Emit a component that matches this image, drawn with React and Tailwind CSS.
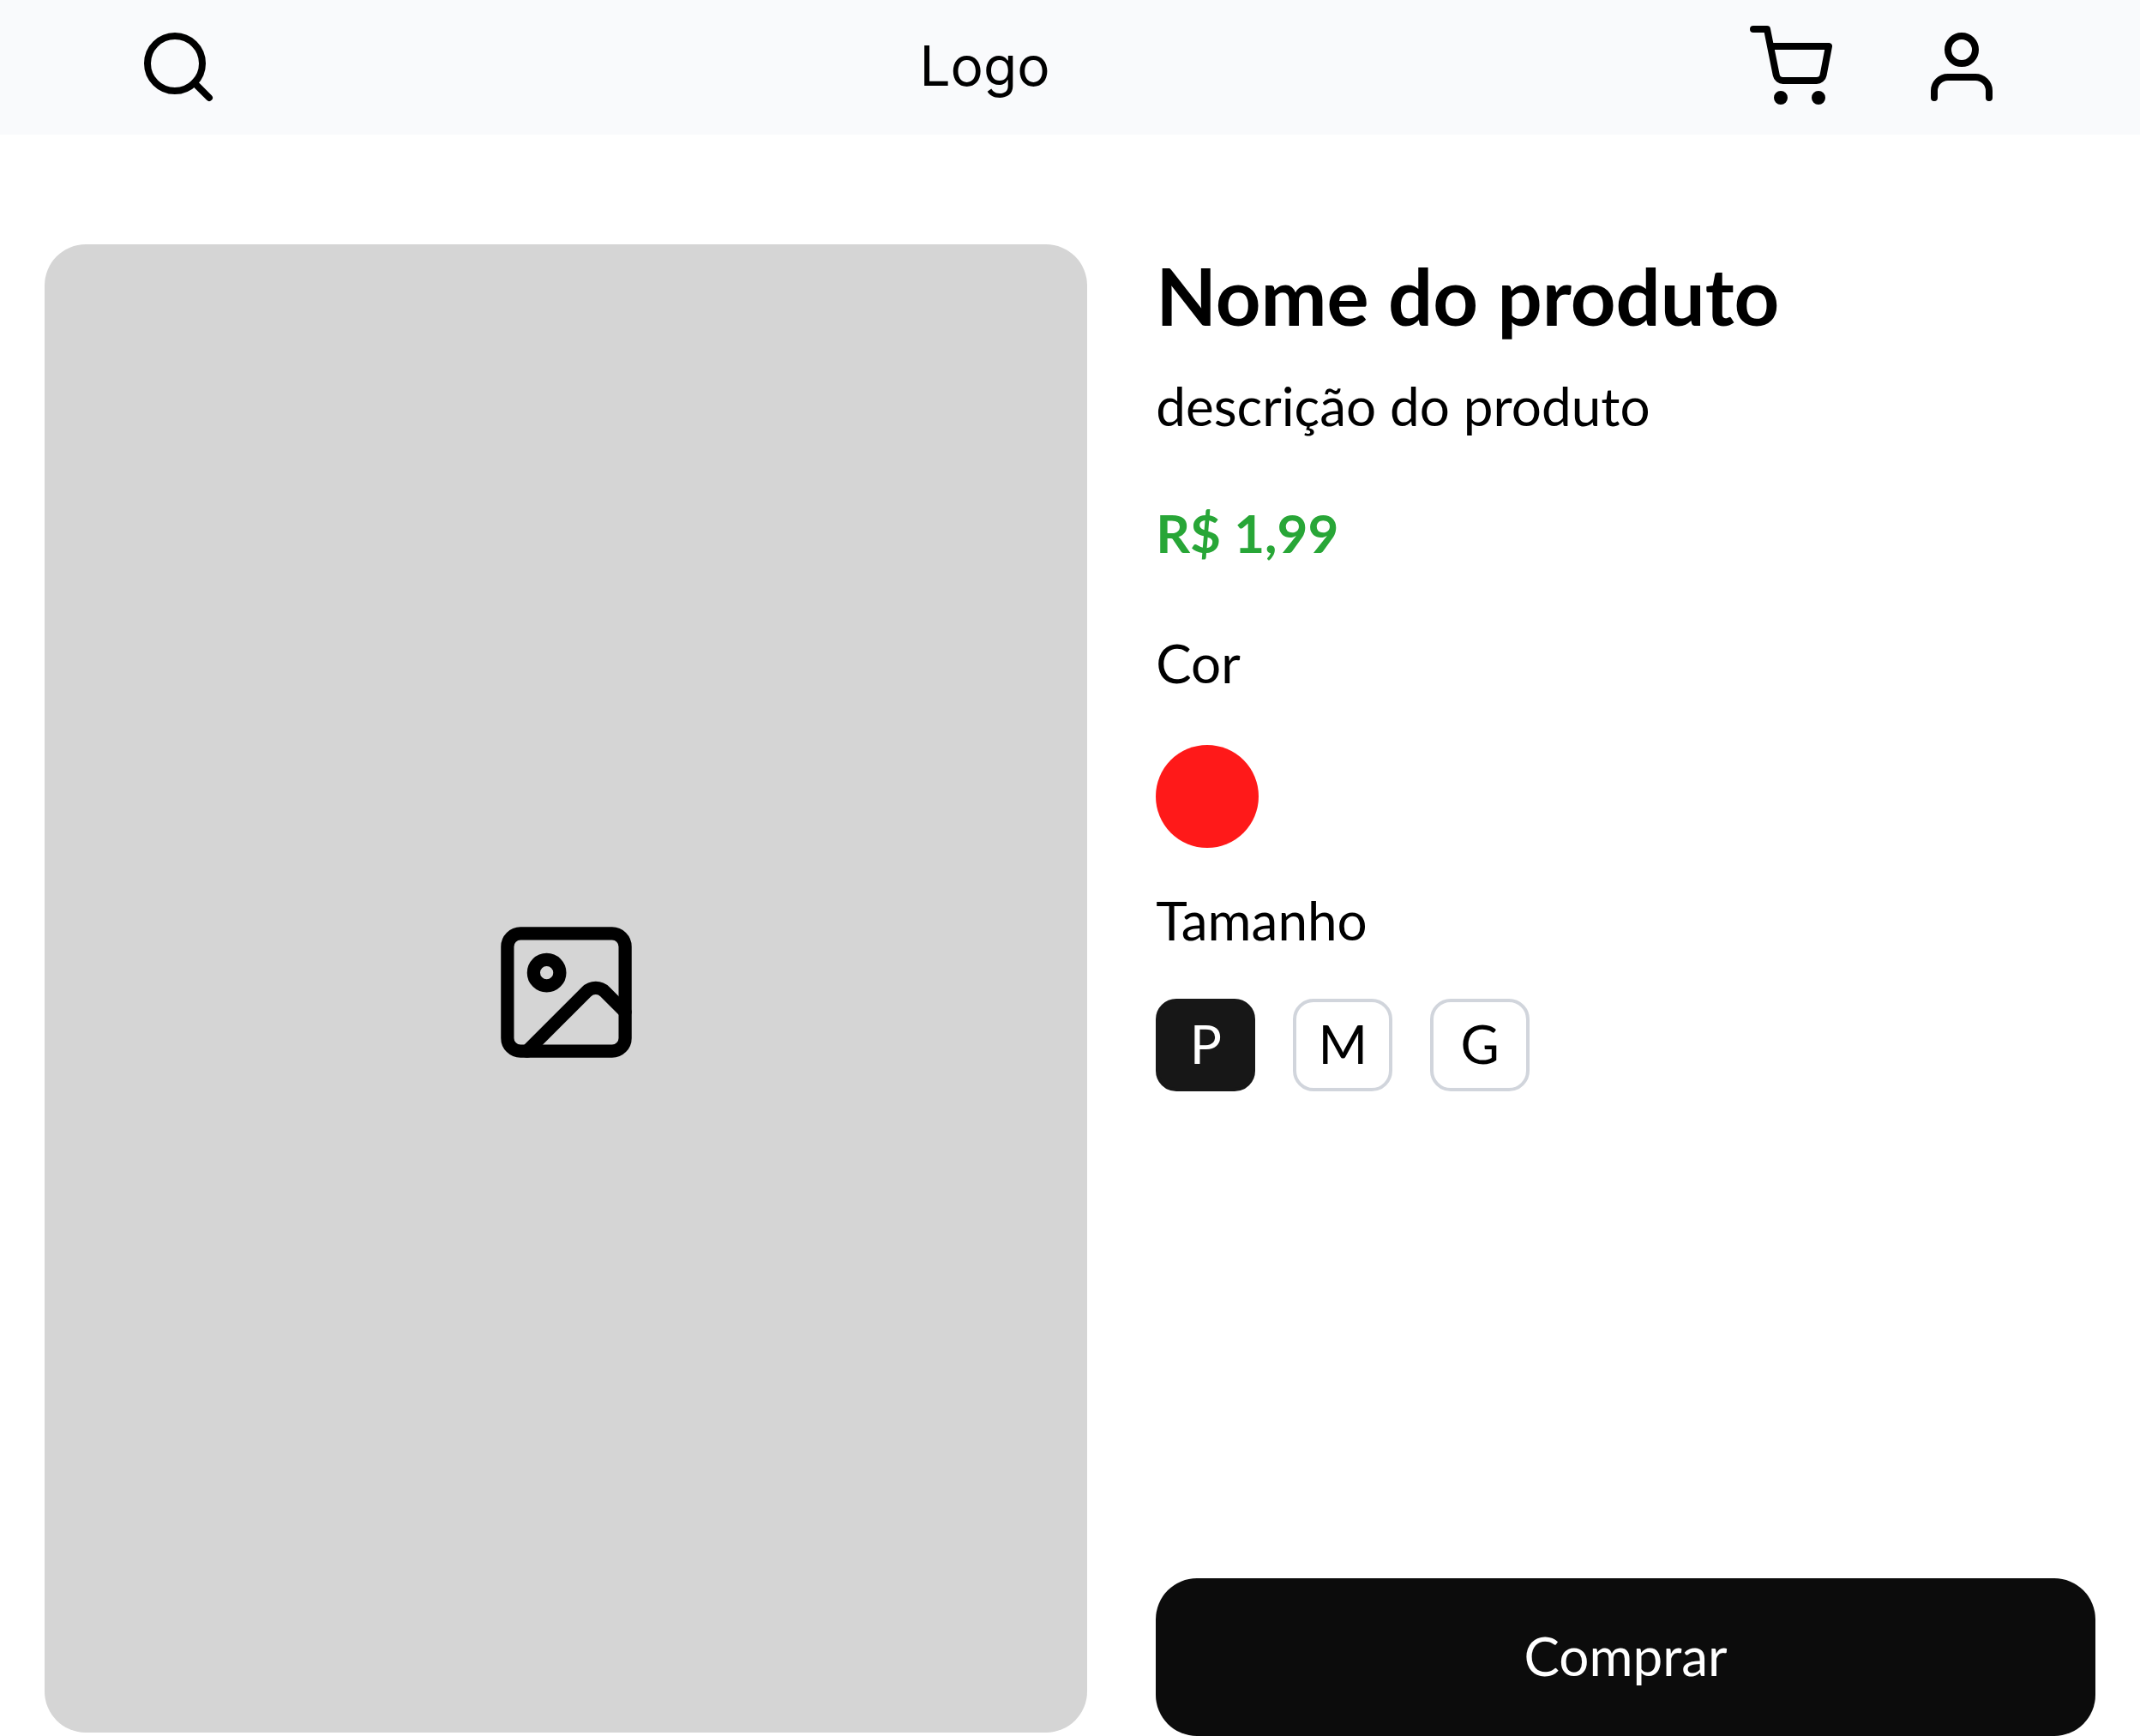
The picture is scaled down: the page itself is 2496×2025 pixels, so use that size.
import React, { useState } from 'react';
import { FiSearch, FiShoppingCart, FiUser } from 'react-icons/fi';
import { Image } from 'lucide-react';

const product = {
  name: 'Nome do produto',
  description: 'descrição do produto',
  price: 1.99,
  colors: [{ name: 'Vermelho', className: 'bg-[#ff1919]' }],
  sizes: ['P', 'M', 'G'],
};

const formatPrice = (value) => `R$ ${value.toFixed(2).replace('.', ',')}`;

const Header = () => (
  <header className="flex items-center justify-between bg-[#f9fafc] px-40 pt-[30px] pb-[31px]">
    <button type="button" aria-label="Buscar">
      <FiSearch className="size-24" />
    </button>
    <a href="#" className="pb-0.5 font-['Inter',sans-serif] text-[64px] leading-[94px]">
      Logo
    </a>
    <nav className="flex items-center gap-[103px]">
      <a href="#carrinho" aria-label="Carrinho">
        <FiShoppingCart className="size-24" />
      </a>
      <a href="#conta" aria-label="Minha conta">
        <FiUser className="size-24" />
      </a>
    </nav>
  </header>
);

const App = () => {
  const [color, setColor] = useState(product.colors[0].name);
  const [size, setSize] = useState('P');

  return (
    <div className="flex min-h-screen flex-col bg-white font-['Lato',sans-serif] text-[62px] leading-20 text-black">
      <Header />

      <main className="grid flex-1 grid-cols-[1.11fr_1fr] gap-20 px-[52px] pt-32">
        {/* Product image */}
        <div className="mb-1 flex items-center justify-center rounded-[48px] bg-[#d5d5d5] pt-2">
          <Image className="size-[183px]" />
        </div>

        {/* Product info */}
        <div className="flex flex-col">
          <h1 className="text-[92px] leading-[120px] font-bold">{product.name}</h1>
          <p className="mt-7">{product.description}</p>
          <p className="mt-17 font-bold text-[#28a637]">{formatPrice(product.price)}</p>

          <h2 className="mt-18">Cor</h2>
          <div className="mt-14 flex gap-11">
            {product.colors.map((item) => (
              <button
                key={item.name}
                type="button"
                aria-label={item.name}
                aria-pressed={color === item.name}
                onClick={() => setColor(item.name)}
                className={`size-30 rounded-full ${item.className}`}
              />
            ))}
          </div>

          <h2 className="mt-11">Tamanho</h2>
          <div className="mt-13 flex gap-11">
            {product.sizes.map((item) => (
              <button
                key={item}
                type="button"
                aria-pressed={size === item}
                onClick={() => setSize(item)}
                className={`h-27 w-29 rounded-3xl border-4 pb-1 ${
                  size === item
                    ? 'border-[#171717] bg-[#171717] text-white'
                    : 'border-[#d1d5dc] bg-white text-black'
                }`}
              >
                {item}
              </button>
            ))}
          </div>

          <button
            type="button"
            className="mt-auto h-46 w-full rounded-[48px] bg-[#0c0c0c] pb-1 text-white"
          >
            Comprar
          </button>
        </div>
      </main>
    </div>
  );
};

export default App;
